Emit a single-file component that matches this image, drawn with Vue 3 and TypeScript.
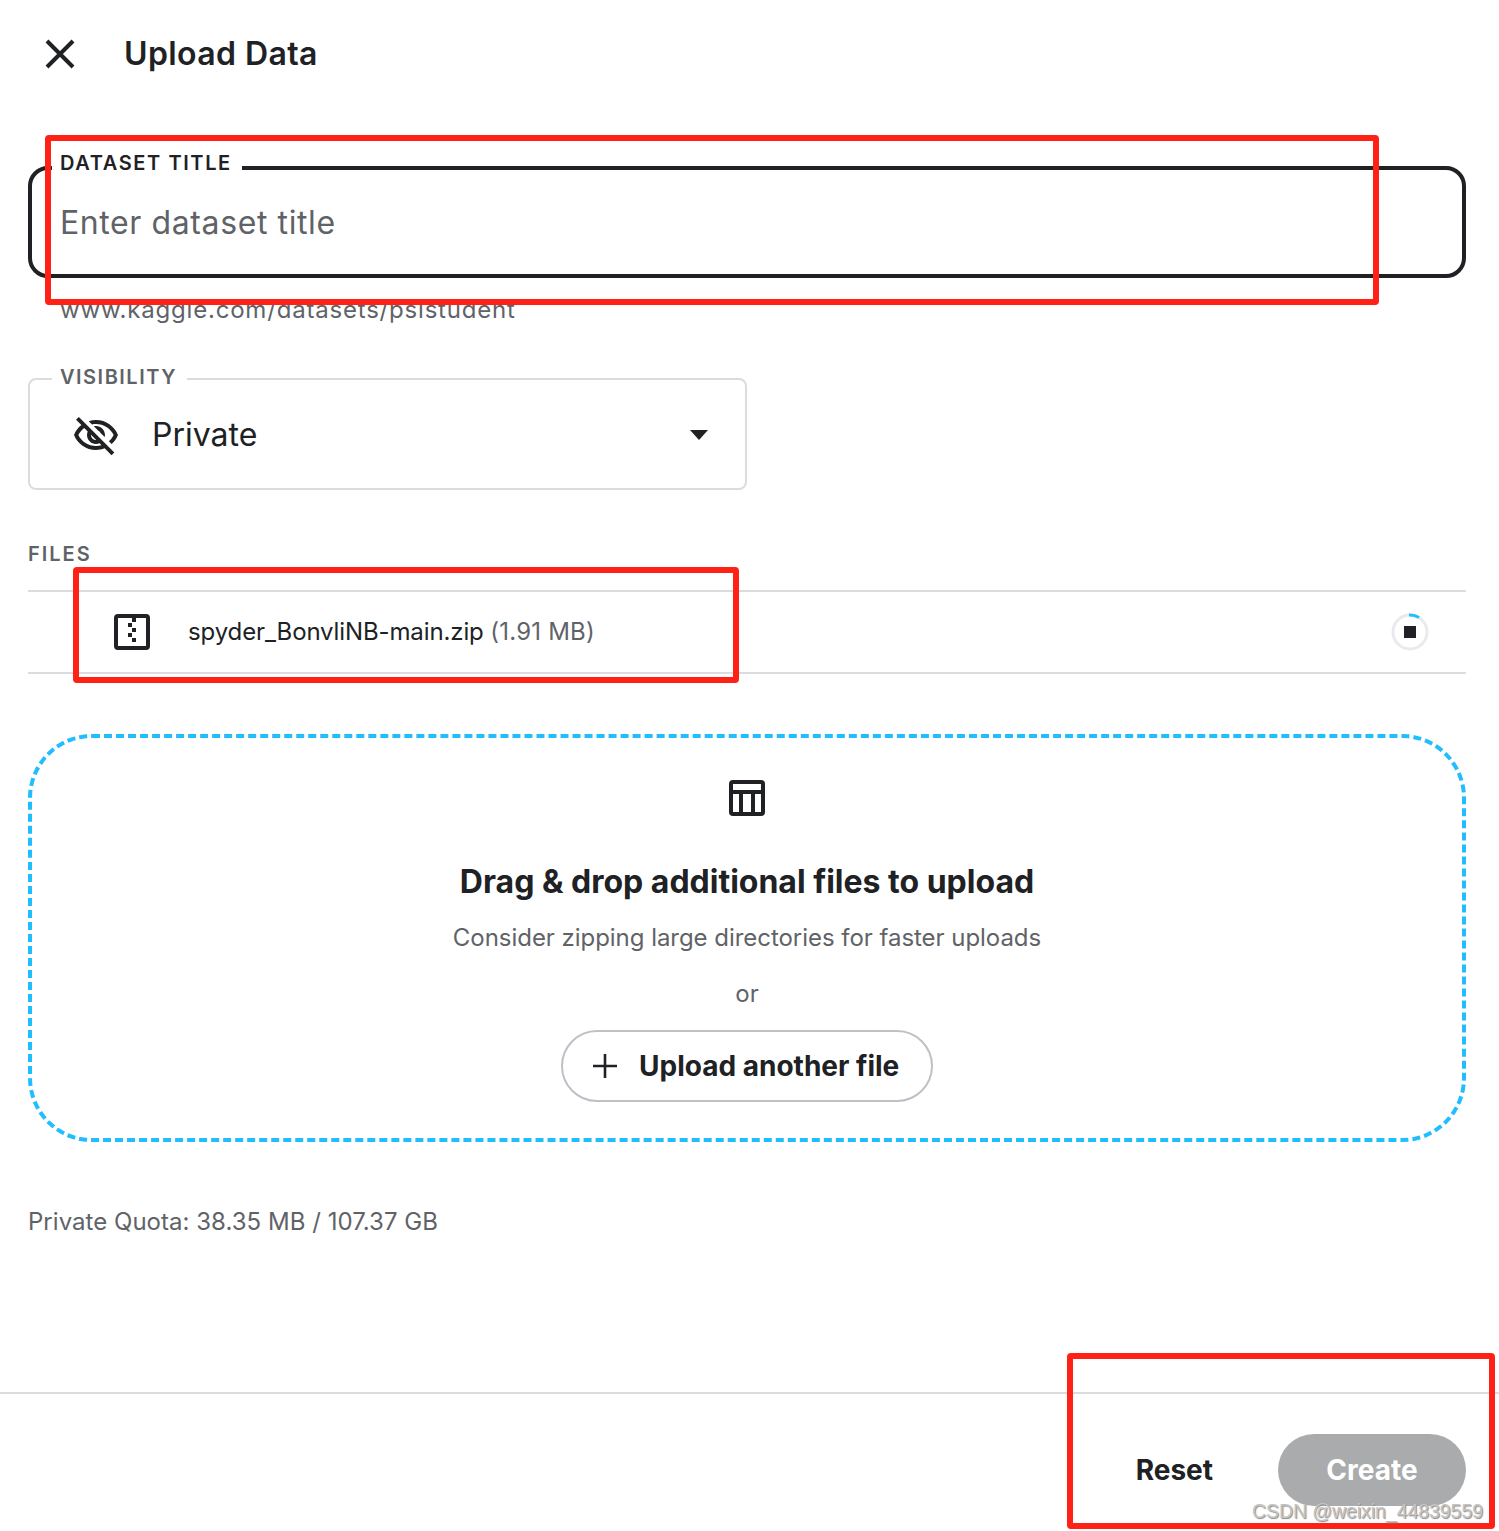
<template>
  <div class="page">
    <header class="top">
      <button class="icon-btn" aria-label="Close">
        <svg width="48" height="48" viewBox="0 0 48 48"><path d="M11 11 L37 37 M37 11 L11 37" fill="none" stroke="#202124" stroke-width="4"/></svg>
      </button>
      <h1 class="title">Upload Data</h1>
    </header>

    <section class="content">
      <div class="field field-active">
        <label class="field-label">DATASET TITLE</label>
        <input class="title-input" v-model="title" placeholder="Enter dataset title" />
      </div>
      <div class="url">www.kaggle.com/datasets/psistudent</div>

      <div class="field field-select">
        <label class="field-label muted">VISIBILITY</label>
        <svg class="eye" width="48" height="48" viewBox="0 0 24 24">
          <path fill="#202124" d="M12 6c3.79 0 7.17 2.13 8.82 5.5-.59 1.22-1.42 2.27-2.41 3.12l1.41 1.41c1.39-1.23 2.49-2.77 3.18-4.53C21.27 7.11 17 4 12 4c-1.27 0-2.49.2-3.64.57l1.65 1.65C10.66 6.09 11.32 6 12 6zm-1.07 1.14L13 9.21c.57.25 1.03.71 1.28 1.28l2.07 2.07c.08-.34.14-.7.14-1.07C16.5 9.01 14.48 7 12 7c-.37 0-.72.05-1.07.14zM2.01 3.87l2.68 2.68C3.06 7.83 1.77 9.53 1 11.5 2.73 15.89 7 19 12 19c1.52 0 2.98-.29 4.32-.82l3.42 3.42 1.41-1.41L3.42 2.45 2.01 3.87zm7.5 7.5l2.61 2.61c-.04.01-.08.02-.12.02-1.38 0-2.5-1.12-2.5-2.5 0-.05.01-.08.01-.13zm-3.4-3.4l1.75 1.75c-.23.55-.36 1.15-.36 1.78 0 2.48 2.02 4.5 4.5 4.5.63 0 1.23-.13 1.77-.36l.98.98c-.88.24-1.8.38-2.75.38-3.79 0-7.17-2.13-8.82-5.5.7-1.43 1.72-2.61 2.93-3.53z"/>
        </svg>
        <span class="select-value">Private</span>
        <svg class="caret" width="18" height="10" viewBox="0 0 18 10"><path d="M0 0h18L9 10z" fill="#202124"/></svg>
      </div>

      <div class="files-label">FILES</div>
      <div class="file-row">
        <svg class="zip" width="36" height="36" viewBox="0 0 36 36">
          <rect x="2" y="2" width="32" height="32" rx="2" fill="none" stroke="#202124" stroke-width="4"/>
          <path fill="#202124" d="M18 4h4v4h-4zM14 9h4v4h-4zM18 14h4v4h-4zM14 19h4v4h-4zM18 24h4v4h-4z"/>
        </svg>
        <span class="file-name">{{ file.name }} <span class="file-size">({{ file.size }})</span></span>
        <svg class="progress" width="38" height="38" viewBox="0 0 38 38">
          <circle cx="19" cy="19" r="17" fill="none" stroke="#e8eaed" stroke-width="3"/>
          <path d="M18 2 A17 17 0 0 1 28 4.500" fill="none" stroke="#20beff" stroke-width="3"/>
          <rect x="13" y="13" width="12" height="12" fill="#202124"/>
        </svg>
      </div>

      <div class="drop">
        <svg width="36" height="36" viewBox="0 0 36 36">
          <rect x="2" y="2" width="32" height="32" rx="2" fill="none" stroke="#202124" stroke-width="4"/>
          <path d="M2 12h32M12 12v22M24 12v22" fill="none" stroke="#202124" stroke-width="4"/>
        </svg>
        <div class="drop-title">Drag &amp; drop additional files to upload</div>
        <div class="drop-hint">Consider zipping large directories for faster uploads</div>
        <div class="drop-or">or</div>
        <button class="outline-btn">
          <svg width="26" height="26" viewBox="0 0 26 26"><path d="M13 1v24M1 13h24" stroke="#202124" stroke-width="2.600" fill="none"/></svg>
          Upload another file
        </button>
      </div>

      <div class="quota">Private Quota: 38.35 MB / 107.37 GB</div>
    </section>

    <footer class="bottom">
      <button class="text-btn">Reset</button>
      <button class="primary-btn" disabled>Create</button>
    </footer>

    <!-- annotations drawn over the screenshot -->
    <div class="mark mark-title"></div>
    <div class="mark mark-file"></div>
    <div class="mark mark-actions"></div>
    <div class="watermark">CSDN @weixin_44839559</div>
  </div>
</template>

<script setup lang="ts">
import { ref } from 'vue'

const title = ref('')
const file = { name: 'spyder_BonvliNB-main.zip', size: '1.91 MB' }
</script>

<style>
html, body { margin: 0; background: #fff; }
</style>

<style scoped>
.page {
  position: relative; width: 1499px; height: 1531px; overflow: hidden;
  background: #fff; color: #202124; font-family: Inter, "Liberation Sans", sans-serif;
}
.top { display: flex; align-items: center; height: 108px; padding-left: 36px; box-sizing: border-box; }
.icon-btn { width: 48px; height: 48px; padding: 0; border: 0; background: none; }
.icon-btn svg { display: block; }
.title { margin: 0 0 0 40px; font-size: 32px; font-weight: 600; line-height: 40px; letter-spacing: 0.4px; }

.content { padding: 58px 33px 0 28px; }
.field { position: relative; box-sizing: border-box; height: 112px; }
.field-active { border: 4px solid #202124; border-radius: 20px; }
.field-label {
  position: absolute; left: 20px; top: -19px; padding: 0 10px 0 8px; background: #fff;
  font-size: 20px; line-height: 24px; font-weight: 600; letter-spacing: 1.6px; color: #202124;
}
.field-label.muted { color: #5f6368; left: 22px; top: -15px; letter-spacing: 1.5px; }
.title-input {
  display: block; box-sizing: border-box; width: 100%; height: 104px; padding: 0 28px;
  border: 0; outline: 0; background: none; font: 400 32px Inter, sans-serif; letter-spacing: 0.6px; color: #202124;
}
.title-input::placeholder { color: #5f6368; opacity: 1; }
.url { margin-top: 18px; padding-left: 32px; font-size: 24px; line-height: 28px; color: #5f6368; letter-spacing: 0.8px; }

.field-select {
  display: flex; align-items: center; width: 719px; margin-top: 54px;
  border: 2px solid #dadce0; border-radius: 8px; padding-left: 42px;
}
.eye { margin-top: 3px; }
.select-value { margin-left: 32px; font-size: 32px; line-height: 40px; margin-top: 2px; }
.caret { margin-left: auto; margin-right: 37px; margin-top: 2px; }

.files-label { margin-top: 52px; font-size: 20px; line-height: 24px; font-weight: 600; letter-spacing: 2px; color: #5f6368; }
.file-row {
  display: flex; align-items: center; height: 84px; margin-top: 24px; box-sizing: border-box;
  border-top: 2px solid #dadce0; border-bottom: 2px solid #dadce0; padding-left: 86px;
}
.file-name { margin-left: 38px; margin-bottom: 2px; font-size: 24px; letter-spacing: -0.12px; }
.file-size { color: #5f6368; letter-spacing: 0.2px; }
.progress { margin-left: auto; margin-right: 37px; }

.drop {
  display: flex; flex-direction: column; align-items: center; box-sizing: border-box;
  height: 408px; margin-top: 60px; padding-top: 42px;
  border: 4px dashed #20beff; border-radius: 64px;
}
.drop-title { margin-top: 44px; font-size: 32px; line-height: 44px; font-weight: 700; }
.drop-hint { margin-top: 18px; font-size: 24px; line-height: 32px; color: #5f6368; letter-spacing: -0.04px; }
.drop-or { margin-top: 24px; font-size: 24px; line-height: 32px; color: #5f6368; }
.outline-btn {
  display: flex; align-items: center; gap: 21px; box-sizing: border-box; height: 72px; width: 372px;
  margin-top: 20px; padding: 0 0 0 29px; background: #fff; border: 2px solid #bdc1c6; border-radius: 36px;
  font: 700 28px Inter, sans-serif; color: #202124;
}
.quota { margin-top: 64px; font-size: 24px; line-height: 32px; color: #5f6368; letter-spacing: 0.03px; }

.bottom {
  position: absolute; left: 0; right: 0; top: 1392px; height: 139px; box-sizing: border-box;
  display: flex; align-items: flex-start; justify-content: flex-end; padding: 40px 33px 0 0;
  border-top: 2px solid #dadce0;
}
.text-btn { padding: 0; height: 72px; margin-right: 65px; border: 0; background: none; font: 700 28px Inter, sans-serif; color: #202124; }
.primary-btn { width: 188px; height: 72px; padding: 0; border: 0; border-radius: 36px; background: #aaabac; color: #fff; font: 700 28px Inter, sans-serif; }

.mark { position: absolute; box-sizing: border-box; border: 6px solid #ff2116; border-radius: 4px; pointer-events: none; }
.mark-title { left: 45px; top: 135px; width: 1334px; height: 170px; }
.mark-file { left: 73px; top: 567px; width: 666px; height: 116px; }
.mark-actions { left: 1067px; top: 1353px; width: 428px; height: 176px; }
.watermark {
  position: absolute; left: 1252px; top: 1499px; font: 19.400px/24px "Liberation Sans", Arial, sans-serif;
  color: #c4c4c4; text-shadow: 1px 1px 1px #8a8a8a;
}
</style>
